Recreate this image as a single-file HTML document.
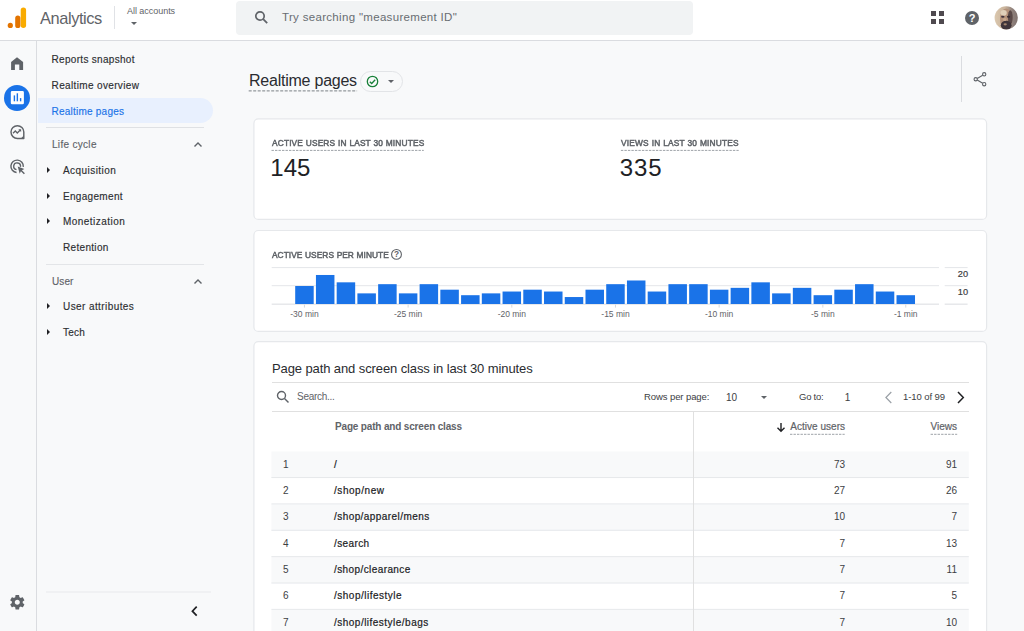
<!DOCTYPE html>
<html><head><meta charset="utf-8"><title>Analytics</title>
<style>
*{box-sizing:border-box;margin:0;padding:0}
html,body{width:1024px;height:631px;overflow:hidden;background:#f8f9fa;font-family:"Liberation Sans",sans-serif;color:#202124}
.a{position:absolute;white-space:nowrap;line-height:1}
#top{position:absolute;left:0;top:0;width:1024px;height:41px;background:#fff;border-bottom:1px solid #dadce0}
#rail{position:absolute;left:0;top:41px;width:37px;height:590px;background:#f8f9fa;border-right:1px solid #dadce0}
.nav{font-size:10px;color:#2c2e31;font-weight:400;-webkit-text-stroke:0.15px #2c2e31}
.navg{font-size:10px;color:#5f6368;-webkit-text-stroke:0.15px #5f6368}
.tri{position:absolute;width:0;height:0;border-left:3px solid #202124;border-top:3px solid transparent;border-bottom:3px solid transparent}
.card{position:absolute;background:#fff;border:1px solid #e3e5e8;border-radius:8px}
.lbl{font-size:8.9px;font-weight:400;color:#5f6368;-webkit-text-stroke:0.5px #5f6368;letter-spacing:.1px;word-spacing:.3px;transform:scaleX(.94);transform-origin:0 0}
.big{font-size:24px;color:#202124}
.ax{font-size:8.5px;color:#5f6368}
.bar{position:absolute;background:#1a73e8;width:18.7px}
.row{position:absolute;left:272px;width:697px;height:26.4px}
.td{font-size:10px;color:#202124;-webkit-text-stroke:0.2px #202124}
.num{font-size:10px;color:#3c4043}
</style></head><body>
<!-- TOP BAR -->
<div id="top">
  <svg class="a" style="left:7px;top:7px" width="20" height="22" viewBox="0 0 20 22">
    <rect x="13.7" y="0.4" width="5.4" height="20.6" rx="2.7" fill="#f9ab00"/>
    <rect x="8.2" y="8.4" width="5.2" height="12.6" rx="2.6" fill="#e37400"/>
    <circle cx="3.3" cy="18.4" r="2.6" fill="#e37400"/>
  </svg>
  <div class="a" id="t_an" style="letter-spacing:-0.411px;left:40px;top:10px;font-size:16.4px;color:#5f6368">Analytics</div>
  <div class="a" style="left:114px;top:6px;width:1px;height:23px;background:#e0e2e6"></div>
  <div class="a" id="t_acc" style="letter-spacing:-0.037px;left:127px;top:7px;font-size:9px;color:#5f6368">All accounts</div>
  <div class="a" style="left:131px;top:22px;border-top:3px solid #5f6368;border-left:3px solid transparent;border-right:3px solid transparent"></div>
  <div class="a" style="left:236px;top:1px;width:457px;height:34px;background:#f1f3f4;border-radius:4px"></div>
  <svg class="a" style="left:254px;top:10px" width="15" height="15" viewBox="0 0 15 15"><circle cx="6" cy="6" r="4.2" fill="none" stroke="#5f6368" stroke-width="1.7"/><path d="M9.2 9.2 L13.2 13.2" stroke="#5f6368" stroke-width="1.8"/></svg>
  <div class="a" id="t_srch" style="letter-spacing:0.318px;left:282px;top:11.5px;font-size:11.5px;color:#686d72">Try searching "measurement ID"</div>
  <!-- apps -->
  <div class="a" style="left:931px;top:11px;width:5px;height:5px;background:#4f4a4f"></div>
  <div class="a" style="left:939px;top:11px;width:5px;height:5px;background:#4f4a4f"></div>
  <div class="a" style="left:931px;top:19px;width:5px;height:5px;background:#4f4a4f"></div>
  <div class="a" style="left:939px;top:19px;width:5px;height:5px;background:#4f4a4f"></div>
  <!-- help -->
  <div class="a" style="left:965px;top:10.5px;width:14px;height:14px;border-radius:50%;background:#5f6368;color:#fff;font-size:11px;font-weight:700;text-align:center;line-height:14px">?</div>
  <!-- avatar -->
  <svg class="a" style="left:994px;top:5px" width="25" height="25" viewBox="0 0 25 25"><defs><clipPath id="av"><circle cx="12.200" cy="12.850" r="11.600"/></clipPath><linearGradient id="avg" x1="0" x2="1" y1="0" y2="0"><stop offset="0" stop-color="#dcc9b0"/><stop offset="0.450" stop-color="#c9b39b"/><stop offset="0.750" stop-color="#8d7f7a"/><stop offset="1" stop-color="#7d6f6c"/></linearGradient><filter id="avb" x="-20%" y="-20%" width="140%" height="140%"><feGaussianBlur stdDeviation="0.700"/></filter></defs><g clip-path="url(#av)"><rect x="0" y="0" width="25" height="25" fill="url(#avg)"/><g filter="url(#avb)"><ellipse cx="12.200" cy="13.900" rx="6.200" ry="10.300" fill="#b3917a"/><ellipse cx="16.300" cy="12.400" rx="2.400" ry="7.200" fill="#5a4a49"/><ellipse cx="9.700" cy="7.800" rx="3.100" ry="2.900" fill="#dfcfb9"/><ellipse cx="12.200" cy="20.200" rx="5.400" ry="4.500" fill="#41363a"/><ellipse cx="8.800" cy="11.700" rx="1.700" ry="1" fill="#40333a"/><ellipse cx="14.600" cy="11.700" rx="1.700" ry="1" fill="#3a2e33"/><ellipse cx="10.700" cy="14.500" rx="1.800" ry="1.600" fill="#c6a68b"/><ellipse cx="11.200" cy="19.300" rx="1.700" ry="1.100" fill="#a4866f"/></g></g></svg>
</div>
<!-- RAIL -->
<div id="rail"></div>
<svg class="a" style="left:10px;top:57px" width="14" height="14" viewBox="0 0 14 14"><path d="M7 0.200 L1.100 5.100 V12.900 H4.900 V7.500 H9.300 V12.900 H13.100 V5.100 Z" fill="#5f6368"/></svg>
<div class="a" style="left:4px;top:85px;width:26px;height:26px;border-radius:50%;background:#1a73e8"></div>
<svg class="a" style="left:10px;top:90px" width="15" height="15" viewBox="0 0 15 15"><rect x="0.800" y="1.100" width="13.100" height="13.100" rx="1.300" fill="#fff"/><rect x="3.700" y="5.400" width="1.400" height="5.900" fill="#1a73e8"/><rect x="6.650" y="3.300" width="1.400" height="8" fill="#1a73e8"/><rect x="9.900" y="8.100" width="1.400" height="3.200" fill="#1a73e8"/></svg>
<svg class="a" style="left:9px;top:124px" width="17" height="17" viewBox="0 0 17 17"><path d="M8.400 1.700 A6.400 6.400 0 1 0 8.400 14.500 H14.800 V8.100 A6.400 6.400 0 0 0 8.400 1.700 Z" fill="none" stroke="#5f6368" stroke-width="1.450" stroke-linejoin="round"/><path d="M14.800 11.500 V14.500 H11.800 Z" fill="#5f6368"/><path d="M4 9.300 L6.300 7 L8.300 9 L11 6.300" fill="none" stroke="#5f6368" stroke-width="1.300"/><path d="M9.300 5.200 H12.100 V8 Z" fill="#5f6368"/></svg>
<svg class="a" style="left:9px;top:158px" width="17" height="17" viewBox="0 0 17 17"><path d="M14.280 8.840 A6.200 6.200 0 1 0 7.560 14.480" fill="none" stroke="#5f6368" stroke-width="1.450"/><path d="M11.450 8.890 A3.400 3.400 0 1 0 7.510 11.650" fill="none" stroke="#5f6368" stroke-width="1.400"/><path d="M8.700 8.600 L15.400 11 L12.900 12.300 L15.900 15.300 L14.900 16.300 L11.900 13.300 L10.700 15.800 Z" fill="#5f6368"/></svg>
<svg class="a" style="left:8px;top:593px" width="19" height="19" viewBox="0 0 19 19"><path fill="#5f6368" transform="translate(0.600 0.600) scale(0.725)" d="M19.43 12.98c.04-.32.07-.64.07-.98s-.03-.66-.07-.98l2.11-1.65c.19-.15.24-.42.12-.64l-2-3.46c-.12-.22-.39-.3-.61-.22l-2.49 1c-.52-.4-1.08-.73-1.69-.98l-.38-2.65C14.46 2.18 14.25 2 14 2h-4c-.25 0-.46.18-.49.42l-.38 2.65c-.61.25-1.17.59-1.69.98l-2.49-1c-.23-.09-.49 0-.61.22l-2 3.46c-.13.22-.07.49.12.64l2.11 1.65c-.04.32-.07.65-.07.98s.03.66.07.98l-2.11 1.65c-.19.15-.24.42-.12.64l2 3.46c.12.22.39.3.61.22l2.49-1c.52.4 1.08.73 1.69.98l.38 2.65c.03.24.24.42.49.42h4c.25 0 .46-.18.49-.42l.38-2.65c.61-.25 1.17-.59 1.69-.98l2.49 1c.23.09.49 0 .61-.22l2-3.46c.12-.22.07-.49-.12-.64l-2.11-1.65zM12 15.5c-1.93 0-3.500-1.57-3.500-3.500s1.570-3.500 3.500-3.500 3.500 1.570 3.500 3.500-1.570 3.500-3.500 3.500z"/></svg>
<!-- SIDEBAR -->
<div class="a" style="left:38px;top:98px;width:175px;height:25px;background:#e8f0fe;border-radius:0 13px 13px 0"></div>
<div class="a nav" id="n1" style="letter-spacing:0.297px;left:51.6px;top:55px">Reports snapshot</div>
<div class="a nav" id="n2" style="letter-spacing:0.351px;left:51.6px;top:81px">Realtime overview</div>
<div class="a nav" id="n3" style="letter-spacing:0.223px;left:51.6px;top:107px;color:#1a73e8;-webkit-text-stroke-color:#1a73e8">Realtime pages</div>
<div class="a" style="left:46px;top:127px;width:158px;height:1px;background:#dfe1e4"></div>
<div class="a navg" id="n4" style="letter-spacing:0.307px;left:52px;top:140px">Life cycle</div>
<svg class="a" style="left:193px;top:141px" width="10" height="7" viewBox="0 0 10 7"><path d="M1.5 5.5 L5 2 L8.5 5.5" fill="none" stroke="#5f6368" stroke-width="1.4"/></svg>
<div class="tri" style="left:47px;top:167px"></div>
<div class="a nav" id="n5" style="letter-spacing:0.442px;left:63px;top:166px">Acquisition</div>
<div class="tri" style="left:47px;top:193px"></div>
<div class="a nav" id="n6" style="letter-spacing:0.314px;left:63px;top:192px">Engagement</div>
<div class="tri" style="left:47px;top:218px"></div>
<div class="a nav" id="n7" style="letter-spacing:0.461px;left:63px;top:217px">Monetization</div>
<div class="a nav" id="n8" style="letter-spacing:0.316px;left:63px;top:243px">Retention</div>
<div class="a" style="left:46px;top:264px;width:158px;height:1px;background:#e3e5e8"></div>
<div class="a navg" id="n9" style="letter-spacing:0.107px;left:52px;top:277px">User</div>
<svg class="a" style="left:193px;top:278px" width="10" height="7" viewBox="0 0 10 7"><path d="M1.5 5.500 L5 2 L8.500 5.500" fill="none" stroke="#5f6368" stroke-width="1.4"/></svg>
<div class="tri" style="left:47px;top:303px"></div>
<div class="a nav" id="n10" style="letter-spacing:0.412px;left:63px;top:302px">User attributes</div>
<div class="tri" style="left:47px;top:329px"></div>
<div class="a nav" id="n11" style="letter-spacing:0.25px;left:63px;top:328px">Tech</div>
<div class="a" style="left:46px;top:591px;width:165px;height:2px;background:#f0f1f3"></div>
<svg class="a" style="left:190px;top:606px" width="9" height="11" viewBox="0 0 9 11"><path d="M6.700 0.700 L2.400 5.200 L6.700 9.700" fill="none" stroke="#202124" stroke-width="1.700"/></svg>
<!-- TITLE -->
<div class="a" id="t_title" style="letter-spacing:-0.235px;left:249px;top:72.6px;font-size:16px;color:#2a2c30">Realtime pages</div>
<div class="a" style="left:360px;top:71px;width:43px;height:21px;border:1px solid #e2e4e7;border-radius:11px;background:#f8f9fa"></div>
<svg class="a" style="left:366px;top:75px" width="13" height="13" viewBox="0 0 13 13"><circle cx="6.500" cy="6.500" r="5.200" fill="none" stroke="#188038" stroke-width="1.300"/><path d="M3.800 6.700 L5.700 8.500 L9.200 4.700" fill="none" stroke="#188038" stroke-width="1.300"/></svg>
<div class="a" style="left:388px;top:80px;border-top:3px solid #5f6368;border-left:3px solid transparent;border-right:3px solid transparent"></div>
<div class="a" style="left:961px;top:56px;width:1px;height:46px;background:#dadce0"></div>
<svg class="a" style="left:973px;top:72px" width="14" height="15" viewBox="0 0 14 15"><circle cx="11.200" cy="2.300" r="1.650" fill="none" stroke="#5f6368" stroke-width="1.100"/><circle cx="2.700" cy="7.250" r="1.650" fill="none" stroke="#5f6368" stroke-width="1.100"/><circle cx="11.200" cy="12.200" r="1.650" fill="none" stroke="#5f6368" stroke-width="1.100"/><path d="M4.200 6.400 L9.700 3.200 M4.200 8.100 L9.700 11.300" stroke="#5f6368" stroke-width="1.100"/></svg>
<!-- CARD 1 -->
<svg class="a" style="left:0;top:0" width="1024" height="631" viewBox="0 0 1024 631">
<rect x="253.900" y="118.900" width="732.700" height="100.550" rx="4.500" fill="#fff" stroke="#e6e8eb" stroke-width="1.200"/>
<rect x="253.900" y="230.500" width="732.700" height="100.900" rx="4.500" fill="#fff" stroke="#e6e8eb" stroke-width="1.200"/>
<rect x="253.900" y="341.550" width="732.700" height="320" rx="4.500" fill="#fff" stroke="#e6e8eb" stroke-width="1.200"/>
</svg>
<svg class="a" style="left:0;top:0" width="1024" height="631" viewBox="0 0 1024 631" fill="none">
<path d="M248.700 90.900 H357.100" stroke="#7b8085" stroke-width="1" stroke-dasharray="3 1.500"/>
<path d="M271.500 150.400 H423.800 M620.900 150.400 H738.700" stroke="#9ea3a8" stroke-width="1" stroke-dasharray="2.400 1.100"/>
<path d="M790 434.300 H844.700 M930.600 434.300 H957.200" stroke="#9ea3a8" stroke-width="1" stroke-dasharray="2.400 1.100"/>
</svg>
<div class="a lbl" id="l1" style="letter-spacing:0.158px;left:271.5px;top:139px">ACTIVE USERS IN LAST 30 MINUTES</div>
<div class="a big" id="b1" style="letter-spacing:0.061px;left:270.3px;top:155.6px">145</div>
<div class="a lbl" id="l2" style="letter-spacing:0.205px;left:620.6px;top:139px">VIEWS IN LAST 30 MINUTES</div>
<div class="a big" id="b2" style="letter-spacing:0.861px;left:619.8px;top:155.6px">335</div>
<!-- CARD 2 -->
<div class="a lbl" id="l3" style="letter-spacing:0.047px;left:272px;top:250.5px">ACTIVE USERS PER MINUTE</div>
<svg class="a" style="left:390px;top:248px" width="13" height="13" viewBox="0 0 13 13"><circle cx="6.500" cy="6.400" r="4.900" fill="none" stroke="#5f6368" stroke-width="1.100"/><text x="6.500" y="9.400" font-family="Liberation Sans" font-size="8.300" font-weight="700" fill="#5f6368" text-anchor="middle">?</text></svg>
<svg class="a" style="left:264px;top:260px" width="716" height="60" viewBox="264 260 716 60">
<path d="M271.7 267.6 H939 M944.7 267.6 H967.6" stroke="#e4e6e9" stroke-width="1" fill="none"/>
<path d="M271.7 285.7 H939 M944.7 285.7 H967.6" stroke="#e4e6e9" stroke-width="1" fill="none"/>
<path d="M271.7 304.15 H939 M944.7 304.15 H967.6" stroke="#dadce0" stroke-width="1" fill="none"/>
<rect x="295.20" y="286.01" width="18.5" height="17.99" fill="#1a73e8"/>
<rect x="315.94" y="274.98" width="18.5" height="29.02" fill="#1a73e8"/>
<rect x="336.67" y="282.33" width="18.5" height="21.67" fill="#1a73e8"/>
<rect x="357.40" y="293.37" width="18.5" height="10.63" fill="#1a73e8"/>
<rect x="378.14" y="284.17" width="18.5" height="19.83" fill="#1a73e8"/>
<rect x="398.88" y="293.37" width="18.5" height="10.63" fill="#1a73e8"/>
<rect x="419.61" y="284.17" width="18.5" height="19.83" fill="#1a73e8"/>
<rect x="440.34" y="289.69" width="18.5" height="14.31" fill="#1a73e8"/>
<rect x="461.08" y="295.20" width="18.5" height="8.79" fill="#1a73e8"/>
<rect x="481.81" y="293.37" width="18.5" height="10.63" fill="#1a73e8"/>
<rect x="502.55" y="291.53" width="18.5" height="12.47" fill="#1a73e8"/>
<rect x="523.28" y="289.69" width="18.5" height="14.31" fill="#1a73e8"/>
<rect x="544.02" y="291.53" width="18.5" height="12.47" fill="#1a73e8"/>
<rect x="564.75" y="297.04" width="18.5" height="6.96" fill="#1a73e8"/>
<rect x="585.49" y="289.69" width="18.5" height="14.31" fill="#1a73e8"/>
<rect x="606.22" y="284.17" width="18.5" height="19.83" fill="#1a73e8"/>
<rect x="626.96" y="280.49" width="18.5" height="23.51" fill="#1a73e8"/>
<rect x="647.69" y="291.53" width="18.5" height="12.47" fill="#1a73e8"/>
<rect x="668.43" y="284.17" width="18.5" height="19.83" fill="#1a73e8"/>
<rect x="689.16" y="284.17" width="18.5" height="19.83" fill="#1a73e8"/>
<rect x="709.90" y="289.69" width="18.5" height="14.31" fill="#1a73e8"/>
<rect x="730.63" y="287.85" width="18.5" height="16.15" fill="#1a73e8"/>
<rect x="751.37" y="282.33" width="18.5" height="21.67" fill="#1a73e8"/>
<rect x="772.11" y="293.37" width="18.5" height="10.63" fill="#1a73e8"/>
<rect x="792.84" y="287.85" width="18.5" height="16.15" fill="#1a73e8"/>
<rect x="813.58" y="295.20" width="18.5" height="8.79" fill="#1a73e8"/>
<rect x="834.31" y="289.69" width="18.5" height="14.31" fill="#1a73e8"/>
<rect x="855.05" y="284.17" width="18.5" height="19.83" fill="#1a73e8"/>
<rect x="875.78" y="291.53" width="18.5" height="12.47" fill="#1a73e8"/>
<rect x="896.51" y="295.20" width="18.5" height="8.79" fill="#1a73e8"/>
<path d="M304.45 304.6 V307.6" stroke="#d5d8dc" stroke-width="1"/>
<path d="M408.12 304.6 V307.6" stroke="#d5d8dc" stroke-width="1"/>
<path d="M511.80 304.6 V307.6" stroke="#d5d8dc" stroke-width="1"/>
<path d="M615.47 304.6 V307.6" stroke="#d5d8dc" stroke-width="1"/>
<path d="M719.15 304.6 V307.6" stroke="#d5d8dc" stroke-width="1"/>
<path d="M822.83 304.6 V307.6" stroke="#d5d8dc" stroke-width="1"/>
<path d="M905.76 304.6 V307.6" stroke="#d5d8dc" stroke-width="1"/>
</svg>
<div class="a ax" style="left:274.45px;top:309.5px;width:60px;text-align:center">-30 min</div>
<div class="a ax" style="left:378.12px;top:309.5px;width:60px;text-align:center">-25 min</div>
<div class="a ax" style="left:481.80px;top:309.5px;width:60px;text-align:center">-20 min</div>
<div class="a ax" style="left:585.47px;top:309.5px;width:60px;text-align:center">-15 min</div>
<div class="a ax" style="left:689.15px;top:309.5px;width:60px;text-align:center">-10 min</div>
<div class="a ax" style="left:792.83px;top:309.5px;width:60px;text-align:center">-5 min</div>
<div class="a ax" style="left:875.76px;top:309.5px;width:60px;text-align:center">-1 min</div>
<div class="a ax" style="left:940px;top:269.5px;width:28px;text-align:right;color:#3c4043;font-size:9.2px;-webkit-text-stroke:0.2px #3c4043">20</div>
<div class="a ax" style="left:940px;top:287.5px;width:28px;text-align:right;color:#3c4043;font-size:9.2px;-webkit-text-stroke:0.2px #3c4043">10</div>
<!-- CARD 3 -->
<div class="a" id="t_tt" style="letter-spacing:-0.104px;left:272px;top:362px;font-size:13px;color:#2a2c30">Page path and screen class in last 30 minutes</div>
<div class="a" style="left:272px;top:382px;width:697px;height:1px;background:#e0e0e0"></div>
<svg class="a" style="left:276px;top:390px" width="14" height="14" viewBox="0 0 14 14"><circle cx="5.500" cy="5.500" r="4" fill="none" stroke="#5f6368" stroke-width="1.400"/><path d="M8.500 8.500 L12.500 12.500" stroke="#5f6368" stroke-width="1.500"/></svg>
<div class="a" id="t_s" style="letter-spacing:-0.274px;left:297px;top:392px;font-size:10px;color:#5f6368">Search...</div>
<div class="a num" id="p1" style="letter-spacing:-0.092px;left:644px;top:392px;font-size:9.5px">Rows per page:</div>
<div class="a num" id="p2" style="left:726px;top:393px">10</div>
<div class="a" style="left:761px;top:396px;border-top:3px solid #5f6368;border-left:3px solid transparent;border-right:3px solid transparent"></div>
<div class="a num" id="p3" style="letter-spacing:-0.232px;left:799px;top:392px;font-size:9.5px">Go to:</div>
<div class="a num" id="p4" style="left:844.7px;top:393px">1</div>
<svg class="a" style="left:884px;top:390px" width="9" height="15" viewBox="0 0 9 15"><path d="M7.300 2 L1.900 7.500 L7.300 13" fill="none" stroke="#9aa0a6" stroke-width="1.200"/></svg>
<div class="a num" id="p5" style="letter-spacing:-0.084px;left:903px;top:392px;font-size:9.5px">1-10 of 99</div>
<svg class="a" style="left:956px;top:390px" width="9" height="15" viewBox="0 0 9 15"><path d="M2 2 L7.300 7.500 L2 13" fill="none" stroke="#202124" stroke-width="1.500"/></svg>
<div class="a" style="left:272px;top:411px;width:697px;height:1px;background:#e0e0e0"></div>
<div class="a" id="h1" style="letter-spacing:-0.164px;left:335px;top:422px;font-size:10px;color:#5f6368;font-weight:700">Page path and screen class</div>
<div class="a" id="h2" style="letter-spacing:0.02px;right:179px;top:422px;font-size:10px;color:#5f6368;-webkit-text-stroke:0.2px #5f6368">Active users</div>
<svg class="a" style="left:776px;top:422px" width="10" height="11" viewBox="0 0 10 11"><path d="M5 1 V9 M1.500 5.800 L5 9.300 L8.500 5.800" fill="none" stroke="#202124" stroke-width="1.400"/></svg>
<div class="a" id="h3" style="letter-spacing:0.022px;right:67px;top:422px;font-size:10px;color:#5f6368;-webkit-text-stroke:0.2px #5f6368">Views</div>
<svg class="a" style="left:264px;top:440px" width="716" height="191" viewBox="264 440 716 191"><rect x="271.4" y="451.50" width="697.4" height="26.36" fill="#f8f9fa"/><rect x="271.4" y="504.22" width="697.4" height="26.36" fill="#f8f9fa"/><rect x="271.4" y="556.94" width="697.4" height="26.36" fill="#f8f9fa"/><rect x="271.4" y="609.66" width="697.4" height="26.36" fill="#f8f9fa"/><path d="M271.4 477.56 H968.8" stroke="#e6e8eb" stroke-width="1"/><path d="M271.4 503.92 H968.8" stroke="#e6e8eb" stroke-width="1"/><path d="M271.4 530.28 H968.8" stroke="#e6e8eb" stroke-width="1"/><path d="M271.4 556.64 H968.8" stroke="#e6e8eb" stroke-width="1"/><path d="M271.4 583.00 H968.8" stroke="#e6e8eb" stroke-width="1"/><path d="M271.4 609.36 H968.8" stroke="#e6e8eb" stroke-width="1"/><path d="M271.4 635.72 H968.8" stroke="#e6e8eb" stroke-width="1"/></svg>
<div class="a num" style="left:283px;top:460px">1</div>
<div class="a td" id="r0" style="left:334px;top:460px">/</div>
<div class="a num" style="right:179px;top:460px">73</div>
<div class="a num" style="right:67px;top:460px">91</div>
<div class="a num" style="left:283px;top:486px">2</div>
<div class="a td" id="r6" style="letter-spacing:0.554px;left:334px;top:486px">/shop/new</div>
<div class="a num" style="right:179px;top:486px">27</div>
<div class="a num" style="right:67px;top:486px">26</div>
<div class="a num" style="left:283px;top:512px">3</div>
<div class="a td" id="r1" style="letter-spacing:0.432px;left:334px;top:512px">/shop/apparel/mens</div>
<div class="a num" style="right:179px;top:512px">10</div>
<div class="a num" style="right:67px;top:512px">7</div>
<div class="a num" style="left:283px;top:539px">4</div>
<div class="a td" id="r2" style="letter-spacing:0.385px;left:334px;top:539px">/search</div>
<div class="a num" style="right:179px;top:539px">7</div>
<div class="a num" style="right:67px;top:539px">13</div>
<div class="a num" style="left:283px;top:565px">5</div>
<div class="a td" id="r3" style="letter-spacing:0.406px;left:334px;top:565px">/shop/clearance</div>
<div class="a num" style="right:179px;top:565px">7</div>
<div class="a num" style="right:67px;top:565px">11</div>
<div class="a num" style="left:283px;top:591px">6</div>
<div class="a td" id="r4" style="letter-spacing:0.504px;left:334px;top:591px">/shop/lifestyle</div>
<div class="a num" style="right:179px;top:591px">7</div>
<div class="a num" style="right:67px;top:591px">5</div>
<div class="a num" style="left:283px;top:618px">7</div>
<div class="a td" id="r5" style="letter-spacing:0.484px;left:334px;top:618px">/shop/lifestyle/bags</div>
<div class="a num" style="right:179px;top:618px">7</div>
<div class="a num" style="right:67px;top:618px">10</div>
<div class="a" style="left:693px;top:412px;width:1px;height:230px;background:#e0e0e0"></div>
</body></html>
